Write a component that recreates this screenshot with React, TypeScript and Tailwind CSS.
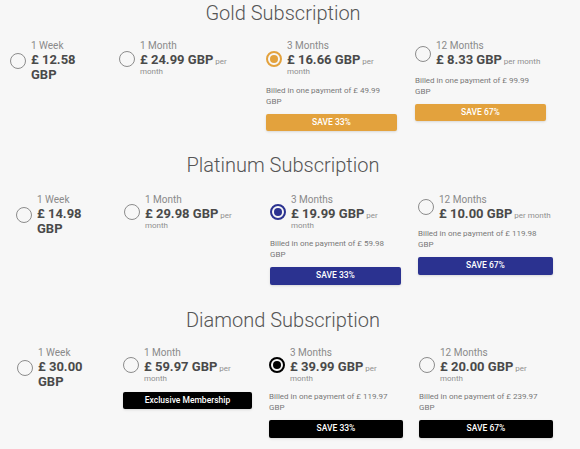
import React from "react";

type Col = {
  label: string;
  price: string;
  per?: string;
  textW: string;
  selected?: boolean;
  billed?: string;
  save?: string;
  extra?: string;
};

type Section = {
  title: string;
  btn: string;
  ring: string;
  dot: string;
  titleMt: string;
  rowMt: string;
  gridCls: string;
  btnWs: string[];
  cols: Col[];
};

function Radio({ selected, ring, dot }: { selected?: boolean; ring: string; dot: string }) {
  if (selected) {
    return (
      <div className={`w-[16px] h-[16px] shrink-0 rounded-full border-2 ${ring} flex items-center justify-center`}>
        <div className={`w-[8px] h-[8px] rounded-full ${dot}`} />
      </div>
    );
  }
  return <div className="w-[16px] h-[16px] shrink-0 rounded-full border-[1.5px] border-[#8c8c8c]" />;
}

const sections: Section[] = [
  {
    title: "Gold Subscription",
    btn: "bg-[#e3a23d]",
    ring: "border-[#e3a23d]",
    dot: "bg-[#e3a23d]",
    titleMt: "mt-[1px]",
    rowMt: "mt-[15px]",
    gridCls: "grid grid-cols-[109px_147px_149px_1fr] pl-[10px]",
    btnWs: ["", "", "w-[131px]", "w-[131px]"],
    cols: [
      { label: "1 Week", price: "£ 12.58 GBP", textW: "w-[62px]" },
      { label: "1 Month", price: "£ 24.99 GBP", per: "per month", textW: "w-[110px]" },
      {
        label: "3 Months",
        price: "£ 16.66 GBP",
        per: "per month",
        textW: "w-[110px]",
        selected: true,
        billed: "Billed in one payment of £ 49.99 GBP",
        save: "SAVE 33%",
      },
      {
        label: "12 Months",
        price: "£ 8.33 GBP",
        per: "per month",
        textW: "w-[112px]",
        billed: "Billed in one payment of £ 99.99 GBP",
        save: "SAVE 67%",
      },
    ],
  },
  {
    title: "Platinum Subscription",
    btn: "bg-[#2b3290]",
    ring: "border-[#2b3290]",
    dot: "bg-[#2b3290]",
    titleMt: "mt-[22px]",
    rowMt: "mt-[16.5px]",
    gridCls: "grid grid-cols-[108px_146px_148px_1fr] pl-[16px]",
    btnWs: ["", "", "w-[131px]", "w-[135px]"],
    cols: [
      { label: "1 Week", price: "£ 14.98 GBP", textW: "w-[62px]" },
      { label: "1 Month", price: "£ 29.98 GBP", per: "per month", textW: "w-[110px]" },
      {
        label: "3 Months",
        price: "£ 19.99 GBP",
        per: "per month",
        textW: "w-[110px]",
        selected: true,
        billed: "Billed in one payment of £ 59.98 GBP",
        save: "SAVE 33%",
      },
      {
        label: "12 Months",
        price: "£ 10.00 GBP",
        per: "per month",
        textW: "w-[118px]",
        billed: "Billed in one payment of £ 119.98 GBP",
        save: "SAVE 67%",
      },
    ],
  },
  {
    title: "Diamond Subscription",
    btn: "bg-black",
    ring: "border-black",
    dot: "bg-black",
    titleMt: "mt-[23px]",
    rowMt: "mt-[15px]",
    gridCls: "grid grid-cols-[106px_146px_150px_1fr] pl-[17px]",
    btnWs: ["", "w-[129px]", "w-[134px]", "w-[134px]"],
    cols: [
      { label: "1 Week", price: "£ 30.00 GBP", textW: "w-[62px]" },
      {
        label: "1 Month",
        price: "£ 59.97 GBP",
        per: "per month",
        textW: "w-[110px]",
        extra: "Exclusive Membership",
      },
      {
        label: "3 Months",
        price: "£ 39.99 GBP",
        per: "per month",
        textW: "w-[110px]",
        selected: true,
        billed: "Billed in one payment of £ 119.97 GBP",
        save: "SAVE 33%",
      },
      {
        label: "12 Months",
        price: "£ 20.00 GBP",
        per: "per month",
        textW: "w-[108px]",
        billed: "Billed in one payment of £ 239.97 GBP",
        save: "SAVE 67%",
      },
    ],
  },
];

export default function App() {
  return (
    <div className="w-[580px] h-[449px] overflow-hidden bg-[#f7f7f7] font-[Roboto,sans-serif]">
      {sections.map((s) => (
        <div key={s.title}>
          <h2 className={`${s.titleMt} w-[566px] text-center text-[20px] leading-[24px] font-light text-[#555]`}>
            {s.title}
          </h2>
          <div className={`${s.rowMt} ${s.gridCls}`}>
            {s.cols.map((c, i) => (
              <div key={c.label} className="flex flex-col items-start">
                <div className="flex items-center gap-[5px]">
                  <Radio selected={c.selected} ring={s.ring} dot={s.dot} />
                  <div className={c.textW}>
                    <div className="text-[10px] leading-[12px] text-[#8a8a8a]">{c.label}</div>
                    <div className="text-[8px] leading-[10px] text-[#8f8f8f]">
                      <span className="text-[13px] leading-[15px] font-bold text-[#4a4a4a]">{c.price}</span>
                      {c.per ? <> {c.per}</> : null}
                    </div>
                  </div>
                </div>
                {c.extra ? (
                  <div
                    className={`mt-[8px] ${s.btnWs[i]} h-[17.5px] rounded-[2px] bg-black flex items-center justify-center text-white text-[8.5px] font-medium shadow-sm`}
                  >
                    {c.extra}
                  </div>
                ) : null}
                {c.billed ? (
                  <div className="mt-[7.5px] w-[125px] text-[8px] leading-[11px] text-[#777]">{c.billed}</div>
                ) : null}
                {c.save ? (
                  <div
                    className={`mt-[7px] ${s.btnWs[i]} h-[17.5px] rounded-[2px] ${s.btn} flex items-center justify-center text-white text-[8.5px] font-medium shadow-sm`}
                  >
                    {c.save}
                  </div>
                ) : null}
              </div>
            ))}
          </div>
        </div>
      ))}
    </div>
  );
}
